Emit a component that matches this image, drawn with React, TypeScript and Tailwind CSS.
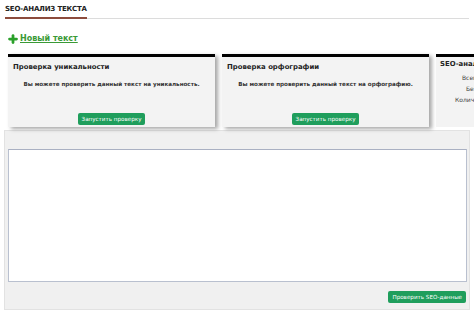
import { Plus } from 'lucide-react';

const font = { fontFamily: '"DejaVu Sans", Verdana, sans-serif' };

function CheckCard({ title, text }: { title: string; text: string }) {
  return (
    <div className="w-[207px] h-[73px] shrink-0 border-t-[3px] border-black bg-[#f3f3f3] shadow-[3px_2px_4px_rgba(0,0,0,0.35)] flex flex-col">
      <div className="pl-[5px] pt-[5px] text-[6.9px] font-bold text-[#222]">{title}</div>
      <div className="pt-[8px] text-center text-[5.6px] font-bold text-[#333]">{text}</div>
      <div className="mt-auto mb-[2px] flex justify-center">
        <button className="h-[12px] px-[4px] rounded-[2px] bg-[#1f9e5c] text-white text-[5.6px] leading-[12px]">
          Запустить проверку
        </button>
      </div>
    </div>
  );
}

export default function App() {
  return (
    <div className="w-[474px] h-[321px] bg-white overflow-hidden" style={font}>
      <div className="mx-[5px] pt-[4px] border-b border-[#dcdcdc] flex">
        <span className="pb-[2px] border-b-2 border-[#8c4b3c] text-[7px] font-bold text-[#222] tracking-[-0.2px] mb-[-1px]">
          SEO-АНАЛИЗ ТЕКСТА
        </span>
      </div>

      <a className="mt-[14px] ml-[7px] flex items-center gap-[1px] text-[8px] font-bold text-[#3a9a36] underline w-max">
        <Plus className="w-[12px] h-[12px] text-[#2aa02a]" strokeWidth={5.5} />
        Новый текст
      </a>

      <div className="mt-[9px] pl-[8px] flex gap-[7px]">
        <CheckCard title="Проверка уникальности" text="Вы можете проверить данный текст на уникальность." />
        <CheckCard title="Проверка орфографии" text="Вы можете проверить данный текст на орфографию." />
        <div className="w-[207px] h-[73px] shrink-0 border-t-[3px] border-black bg-[#f3f3f3] pt-[2px] pl-[4px]">
          <div className="text-[6.9px] font-bold text-[#222]">SEO-анализ текста</div>
          <div className="pl-[22px] pt-[4px] flex flex-col gap-[2px] text-[6px] text-[#444]">
            <span>Всего символов</span>
            <span className="pl-[4px]">Без пробелов</span>
            <span className="-ml-[7px]">Количество слов</span>
          </div>
        </div>
      </div>

      <div className="mt-[3px] ml-[4px] w-[466px] h-[180px] bg-[#f0f0f0] border border-[#e2e2e2] px-[3px] pt-[18px] flex flex-col">
        <textarea className="w-[459px] h-[133px] bg-white border border-[#b9c0cf] border-t-[#a9b0c2] resize-none outline-none" />
        <div className="mt-[9px] flex justify-end">
          <button className="h-[12px] px-[4px] rounded-[2px] bg-[#1f9e5c] text-white text-[5.6px] leading-[12px]">
            Проверить SEO-данные
          </button>
        </div>
      </div>
    </div>
  );
}
